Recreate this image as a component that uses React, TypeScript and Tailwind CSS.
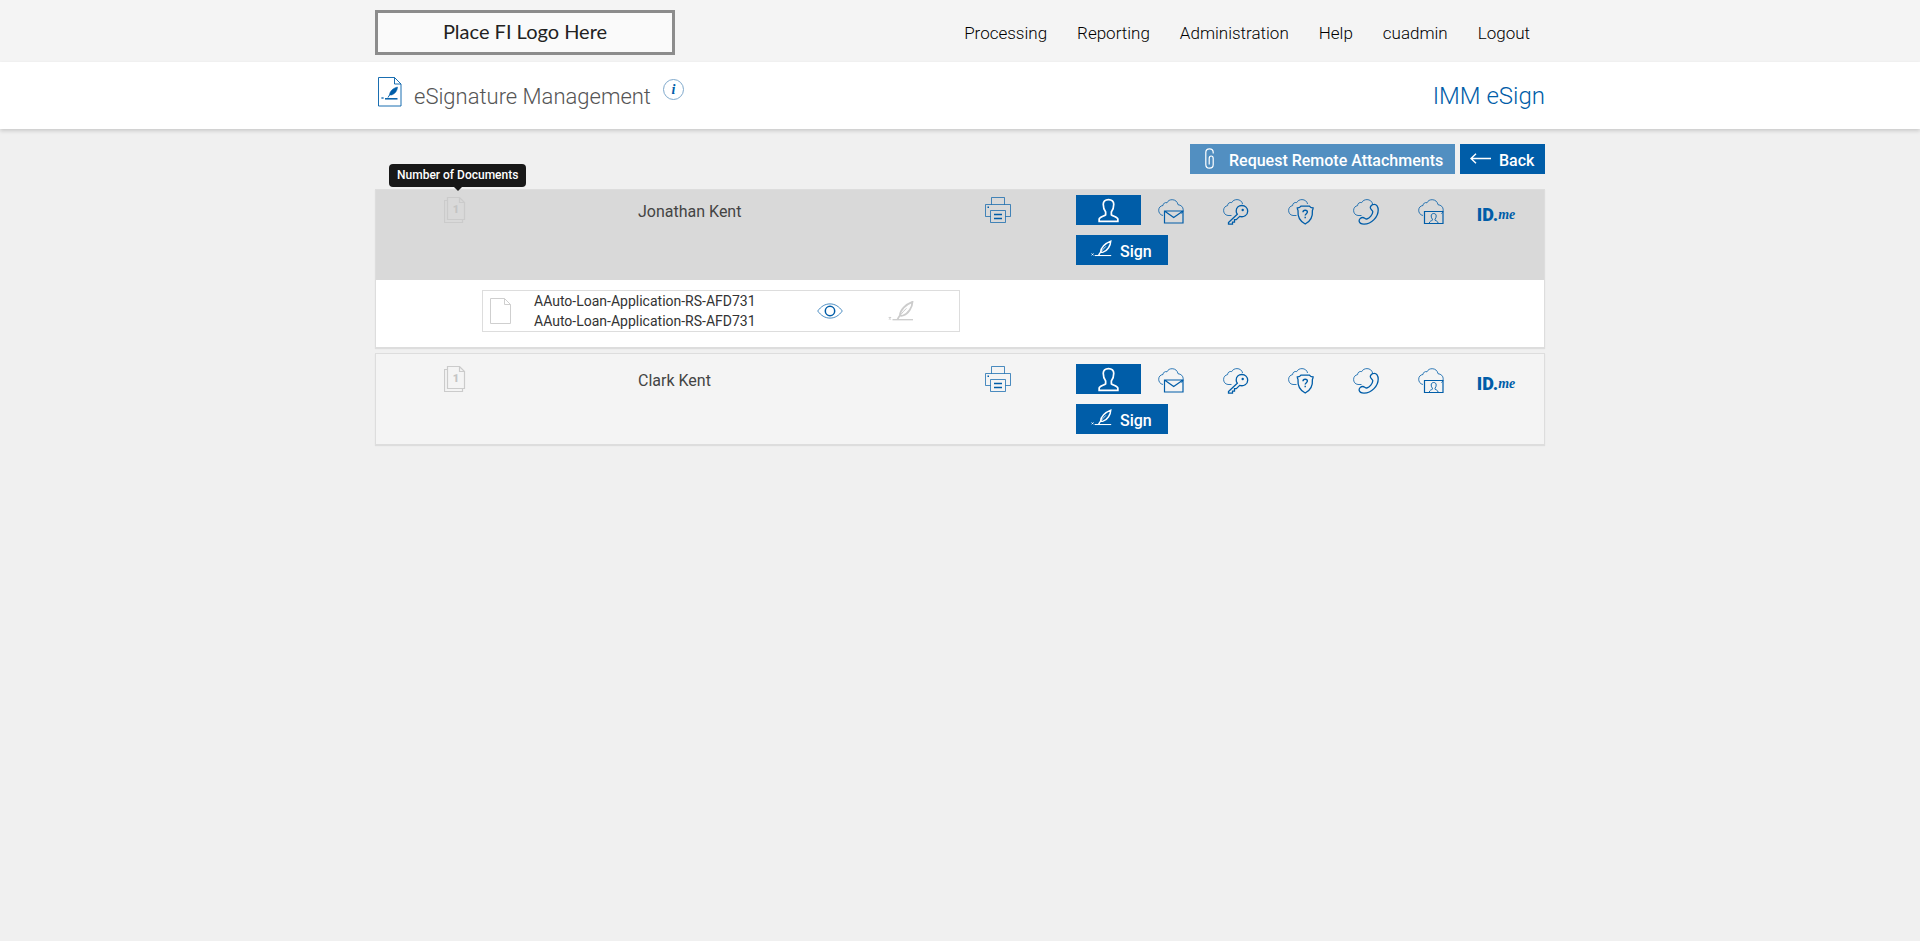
import React from 'react';

const NAV_ITEMS = ['Processing', 'Reporting', 'Administration', 'Help', 'cuadmin', 'Logout'];

interface Signer {
  name: string;
  documentCount: number;
  expanded: boolean;
  documents: string[][];
}

const SIGNERS: Signer[] = [
  {
    name: 'Jonathan Kent',
    documentCount: 1,
    expanded: true,
    documents: [['AAuto-Loan-Application-RS-AFD731', 'AAuto-Loan-Application-RS-AFD731']],
  },
  { name: 'Clark Kent', documentCount: 1, expanded: false, documents: [] },
];

/* ---------- Icons ---------- */

interface IconProps {
  className?: string;
}

const CLOUD_PATH =
  'M5 16.5C2 16 .7 13.5.7 11.2.7 8.5 2.5 6.8 5 6.5 5 4.5 7 3 9 3.8 10 1.5 12 .7 14.2.7c3 0 5.3 2 5.8 5 3 .3 5.2 2.3 5.2 5 0 1.8-.8 3.2-1.8 4';

const SMALL_CLOUD_PATH =
  'M8.5 16.5H5C2 16.2.6 13.8.6 11.4.6 8.8 2.3 7 4.6 6.6 4.6 4.4 6.5 3 8.7 3.6 9.8 1.5 11.8.6 14 .6c2.8 0 5 1.7 5.6 4.4';

const PenIcon: React.FC<IconProps> = ({ className = '' }) => (
  <svg viewBox="0 0 26 20" width="21" height="17" fill="none" stroke="currentColor" className={className} aria-hidden="true">
    <path d="M.8 16.200l2.200 2.200M3 16.200L.8 18.400" strokeWidth="1.200" />
    <path d="M4.500 18.700H25" strokeWidth="1.300" />
    <path d="M9.500 18.500c.6-1.500 1.400-2.700 2.400-4C12 9 17.500 3.500 24.500.8c-.2 5.500-4 12-9.500 13.700-1.300.4-2.300.4-3.100 0" strokeWidth="1.800" />
    <path d="M12 14.500c2-2.500 4-4.800 6.500-7.200" strokeWidth="1" />
  </svg>
);

const PersonIcon: React.FC<IconProps> = ({ className = '' }) => (
  <svg viewBox="0 0 22 26" width="21" height="25" fill="none" stroke="currentColor" strokeWidth="1.800" className={className} aria-hidden="true">
    <path d="M11 1.500c-3.600 0-5.500 2-5.500 5 0 3.500.8 6 2.500 8v3c-1.500 1.500-6.500 2.200-6.800 4.500v2.500h19.600V22c-.3-2.300-5.300-3-6.800-4.500v-3c1.700-2 2.500-4.500 2.500-8 0-3-1.900-5-5.500-5z" />
  </svg>
);

const PrinterIcon = () => (
  <svg viewBox="0 0 26 26" width="26" height="26" fill="none" stroke="#005da8" aria-hidden="true">
    <path d="M6.500 7.500V.5h13v7M5.500 19.500h-5v-12h25v12h-5" strokeWidth=".7" />
    <path d="M5.500 13.500h15v12h-15z" strokeWidth=".7" />
    <path d="M9 17.500h8M9 21.500h8" strokeWidth="1.500" />
    <path d="M2.500 9.500h1.500v1.500H2.500z" fill="#005da8" stroke="none" />
  </svg>
);

const CopiesIcon: React.FC<{ count: number }> = ({ count }) => (
  <svg viewBox="0 0 22 26" width="22" height="26" fill="none" stroke="#cbcbcb" role="img" aria-label={`${count} document`}>
    <path d="M3.500.500h12l5 5v17h-17zM15.500.500v5h5M3.500 3.500h-3v22h18v-3" strokeWidth="1.200" />
    <text x="12" y="16" textAnchor="middle" fill="#c4c4c4" stroke="none" className="font-[Roboto] text-[11px] font-black">
      {count}
    </text>
  </svg>
);

const PageIcon = () => (
  <svg viewBox="0 0 21 26" width="21" height="26" fill="none" stroke="#cfcfcf" aria-hidden="true">
    <path d="M.5.500h14l6 6v19H.500zM14.500.500v6h6" />
  </svg>
);

const EyeIcon = () => (
  <svg viewBox="0 0 26 16" width="26" height="16" fill="none" stroke="#005da8" aria-hidden="true">
    <path d="M.7 8C4 3.500 8 .9 13 .9S22 3.500 25.300 8C22 12.500 18 15.100 13 15.100S4 12.500.7 8z" strokeWidth=".7" />
    <circle cx="13" cy="8" r="4.700" strokeWidth="1.500" />
  </svg>
);

const TitleIcon = () => (
  <svg viewBox="0 0 24 30" width="24" height="30" fill="none" stroke="#005da8" aria-hidden="true">
    <path d="M.5.500h16l6.500 6.500v22H.500zM16.500.500v6.500h6.500" strokeWidth=".9" />
    <path d="M3.500 20l2 2M5.500 20l-2 2" strokeWidth=".8" />
    <path d="M7 21.800h12.500" strokeWidth="1.500" />
    <path d="M10 20.500c.5-1 1-1.800 1.800-2.700" strokeWidth="1" />
    <path d="M11.500 18c0-3.500 3.500-7 8-8 0 3.500-2.500 7-6 8z" fill="#005da8" strokeWidth=".5" />
  </svg>
);

const PaperclipIcon = () => (
  <svg viewBox="0 0 9 21" width="9" height="21" fill="none" stroke="currentColor" strokeWidth="1.200" className="-mt-0.5 shrink-0" aria-hidden="true">
    <path d="M8.200 5.500V4.300C8.200 2 6.800.8 4.500.8S.8 2 .8 4.500v12c0 2.500 1.300 3.700 3.700 3.700s3.700-1.200 3.700-3.700V10.500c0-1.700-.7-2.500-2-2.500s-2 .8-2 2.500v6" />
  </svg>
);

const ArrowLeftIcon = () => (
  <svg viewBox="0 0 21 11" width="21" height="11" fill="none" stroke="currentColor" strokeWidth="1.400" className="-mt-0.5" aria-hidden="true">
    <path d="M1 5.500h20M6 .7L1 5.500l5 4.800" />
  </svg>
);

const CloudIcon: React.FC<{ small?: boolean; children: React.ReactNode }> = ({ small, children }) => (
  <svg viewBox="0 0 26 26" width="26" height="26" fill="none" stroke="#005da8" aria-hidden="true">
    <path d={small ? SMALL_CLOUD_PATH : CLOUD_PATH} strokeWidth=".8" />
    {children}
  </svg>
);

const MailIcon = () => (
  <CloudIcon>
    <path d="M6.500 12h18.500v12H6.500zM6.500 12l9.200 6.500L25 12" strokeWidth="1.200" />
  </CloudIcon>
);

const KeyIcon = () => (
  <CloudIcon small>
    <path d="M14.300 15.200L5.500 23.500v1.700h4v-2h2v-2.500h1.800l3.400-3.300c4 1.300 8-1.200 8-5.200 0-3.300-2.500-5.700-5.800-5.700s-5.700 2.400-5.700 5.500c0 1.200.4 2.300 1.100 3.200z" strokeWidth="1.300" />
    <circle cx="19.700" cy="11" r="1.200" fill="#005da8" stroke="none" />
  </CloudIcon>
);

const ShieldIcon = () => (
  <CloudIcon small>
    <path d="M17.200 25c-5-2.500-7.700-7-7.200-13.500-.5-1-.7-1.800-.7-2.500C11 9 12.200 8.400 13 7.200h8.400c.8 1.200 2 1.800 3.700 1.800 0 .7-.2 1.500-.7 2.500.500 6.500-2.200 11-7.200 13.500z" strokeWidth="1.300" />
    <path d="M15 13.200c0-1.200.9-1.900 2.200-1.900s2.200.7 2.200 1.800c0 1.600-2.200 1.600-2.200 3.400M17.200 17.700v1.600" strokeWidth="1.400" />
  </CloudIcon>
);

const PhoneIcon = () => (
  <CloudIcon small>
    <path d="M21 5.300c2.600-.2 4.200 2.400 4.200 5.700 0 7-6.500 14-14.200 14.200-2.700 0-4.500-1-4.900-3-.2-2 1.600-3.700 3.700-3.700 1.700 0 2.300 1.700 4 1.500 3-.8 5.700-4.200 6-7.300 0-1.700-2.300-1.900-2.500-3.900-.1-1.800 1.700-3.400 3.700-3.500z" strokeWidth="1.300" />
  </CloudIcon>
);

const ScreenIcon = () => (
  <CloudIcon>
    <path d="M6.500 12.500H25v12H6.500z" strokeWidth="1.200" />
    <path d="M15.700 14.500c-1.600 0-2.500 1-2.500 2.500 0 1.300.5 2.500 1.200 3.200v1c-1 .7-3 .8-3.200 3.300h9c-.2-2.500-2.200-2.600-3.200-3.300v-1c.7-.7 1.200-1.900 1.200-3.200 0-1.500-.9-2.500-2.500-2.500z" strokeWidth=".9" />
  </CloudIcon>
);

/* ---------- Signer actions ---------- */

const REMOTE_METHODS = [
  { id: 'email', label: 'Remote by email', icon: MailIcon },
  { id: 'password', label: 'Remote with password', icon: KeyIcon },
  { id: 'questions', label: 'Remote with security questions', icon: ShieldIcon },
  { id: 'phone', label: 'Remote with phone', icon: PhoneIcon },
  { id: 'video', label: 'Remote with video', icon: ScreenIcon },
];

const SignerActions = () => (
  <div className="flex flex-col items-start gap-2.5">
    <div className="flex">
      <button type="button" aria-label="In person" className="flex h-[30px] w-[65px] items-center justify-center bg-[#005da8] text-white">
        <PersonIcon />
      </button>
      <div className="flex gap-[5px]">
        {REMOTE_METHODS.map(({ id, label, icon: Icon }) => (
          <button key={id} type="button" aria-label={label} className="flex h-[30px] w-[60px] items-end justify-center">
            <Icon />
          </button>
        ))}
        <button type="button" className="flex h-[30px] w-[60px] items-end justify-center text-[#005da8]">
          <span className="font-[Roboto] text-lg/5 font-black">ID.</span>
          <span className="font-['Liberation_Serif'] text-sm/5 font-bold italic">me</span>
        </button>
      </div>
    </div>
    <button type="button" className="flex h-[30px] w-[92px] items-center gap-2 bg-[#005da8] pl-[15px] text-base/5 font-medium text-white">
      <PenIcon className="-mt-1" />
      <span className="pt-1">Sign</span>
    </button>
  </div>
);

const DocumentCard: React.FC<{ lines: string[] }> = ({ lines }) => (
  <div className="flex h-[42px] w-[478px] items-center border border-[#dddddd] pl-[7px]">
    <PageIcon />
    <div className="w-[306px] pl-[23px] text-sm/5 text-[#333333]">
      {lines.map((line, index) => (
        <div key={index}>{line}</div>
      ))}
    </div>
    <button type="button" aria-label="View document" className="w-[71px]">
      <EyeIcon />
    </button>
    <button type="button" aria-label="Sign document" disabled className="text-[#cccccc]">
      <PenIcon className="h-5 w-[26px]" />
    </button>
  </div>
);

const SignerPanel: React.FC<{ signer: Signer }> = ({ signer }) => (
  <li className="border border-[#dddddd] shadow-[0_1px_1px_rgba(0,0,0,0.08)]">
    <div
      className={`grid grid-cols-[158px_1fr_156px_468px] items-start ${
        signer.expanded ? 'bg-[#d9d9d9] pt-[5px] pb-[15px]' : 'bg-[#f4f4f4] py-2.5'
      }`}
    >
      <div className="relative flex justify-center pt-0.5">
        <CopiesIcon count={signer.documentCount} />
        {signer.expanded && (
          <div
            role="tooltip"
            className="absolute bottom-full left-[13px] mb-2 rounded bg-[#181818] px-2 text-xs/[23px] font-medium whitespace-nowrap text-white"
          >
            Number of Documents
            <span className="absolute top-full left-1/2 -translate-x-1/2 border-x-4 border-t-4 border-x-transparent border-t-[#181818]" />
          </div>
        )}
      </div>
      <h2 className="pt-[5px] pl-[104px] text-base/6 text-[#444444]">{signer.name}</h2>
      <button type="button" aria-label="Print documents" className="flex justify-center pt-0.5">
        <PrinterIcon />
      </button>
      <SignerActions />
    </div>
    {signer.expanded && (
      <div className="bg-white pt-2.5 pb-[15px] pl-[106px]">
        {signer.documents.map((lines, index) => (
          <DocumentCard key={index} lines={lines} />
        ))}
      </div>
    )}
  </li>
);

export default function App() {
  return (
    <div className="min-h-screen bg-[#f0f0f0] font-['Roboto',sans-serif]">
      <header className="bg-[#f4f4f4]">
        <div className="mx-auto flex h-[62px] max-w-[1170px] items-center justify-between">
          <div className="mt-[3px] flex h-[45px] w-[300px] items-center justify-center border-3 border-[#8c8c8c] bg-[#fafafa] pb-1 font-[Lato] text-xl/6 text-[#222222]">
            Place FI Logo Here
          </div>
          <nav className="mt-1 flex gap-[30px] pr-[15px] text-[17px]/6 font-light text-black">
            {NAV_ITEMS.map((item) => (
              <a key={item} href="#">
                {item}
              </a>
            ))}
          </nav>
        </div>
      </header>

      <div className="relative bg-white shadow-[0_2px_4px_rgba(0,0,0,0.16)]">
        <div className="mx-auto flex h-[67px] max-w-[1170px] items-center justify-between">
          <div className="flex items-center pl-[3px]">
            <span className="mb-2">
              <TitleIcon />
            </span>
            <h1 className="pt-0.5 pl-3 text-[22px]/8 font-light text-[#555555]">eSignature Management</h1>
            <button
              type="button"
              aria-label="Information"
              className="mb-3 ml-3 h-[21px] w-[21px] rounded-full border border-[#7fa9cc] font-['Liberation_Serif'] text-sm/[18px] font-bold text-[#005da8] italic"
            >
              i
            </button>
          </div>
          <div className="text-2xl/8 font-light text-[#005da8]">IMM eSign</div>
        </div>
      </div>

      <main className="mx-auto max-w-[1170px] pt-[15px]">
        <div className="flex justify-end gap-[5px] text-base/5 font-medium text-white">
          <button type="button" className="flex h-[30px] w-[265px] items-center gap-[15px] bg-[#528fc1] pl-[15px] whitespace-nowrap">
            <PaperclipIcon />
            <span className="pt-1">Request Remote Attachments</span>
          </button>
          <button type="button" className="flex h-[30px] w-[85px] items-center gap-2 bg-[#005da8] pl-2.5">
            <ArrowLeftIcon />
            <span className="pt-1">Back</span>
          </button>
        </div>
        <ul className="mt-[15px] flex flex-col gap-[5px]">
          {SIGNERS.map((signer) => (
            <SignerPanel key={signer.name} signer={signer} />
          ))}
        </ul>
      </main>
    </div>
  );
}
